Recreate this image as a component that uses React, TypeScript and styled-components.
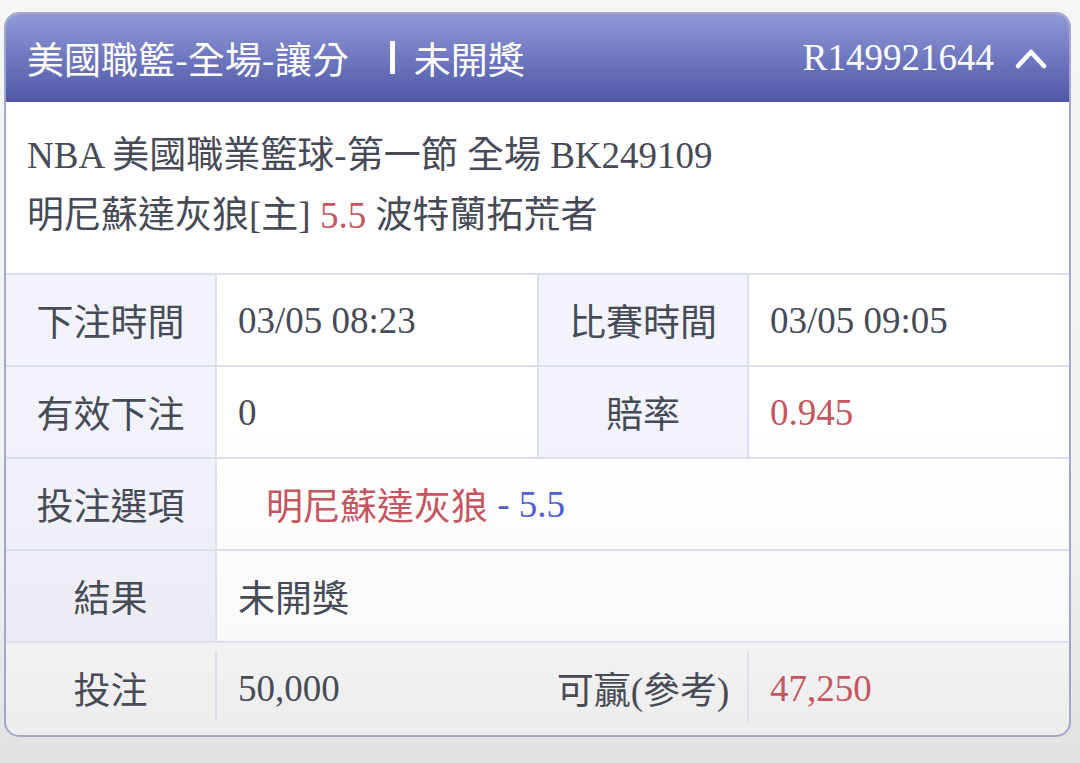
import React from "react";
import styled, { createGlobalStyle } from "styled-components";

const FONT = `"Liberation Serif", "Noto Sans CJK TC", serif`;
const TEXT = "#464b57";
const RED = "#c55660";
const BLUE = "#4c60d4";
const LINE = "#dcdff0";

const GlobalStyle = createGlobalStyle`
	html, body {
		margin: 0;
		padding: 0;
	}
	body {
		min-height: 763px;
		background: linear-gradient(to bottom, #f6f6f6 0%, #f1f1f1 70%, #e1e1e1 100%);
		font-family: ${FONT};
		color: ${TEXT};
	}
`;

const Page = styled.div`
	padding: 12px 9px 28px 4px;
`;

const Card = styled.div`
	border: 2px solid #a3a7cf;
	border-radius: 15px;
	overflow: hidden;
	background: linear-gradient(to bottom, #ffffff 0%, #ffffff 55%, #ededed 100%);
`;

const Header = styled.div`
	display: flex;
	align-items: center;
	height: 87px;
	padding: 0 22px 0 21px;
	background: linear-gradient(to bottom, #9099d6 0%, #6f78bf 50%, #5059a6 100%);
	border-bottom: 1px solid #4a539c;
	color: #fff;
	font-size: 37px;
`;

const Title = styled.span`
	font-family: "Noto Sans CJK TC", "Liberation Serif", sans-serif;
`;

const Divider = styled.span`
	display: inline-block;
	width: 5px;
	height: 33px;
	background: #fff;
	margin: 0 19px 0 41px;
`;

const Spacer = styled.div`
	flex: 1;
`;

const OrderNo = styled.span`
	font-family: "Liberation Serif", serif;
	margin-right: 21px;
`;

const Info = styled.div`
	padding: 24px 22px 27px 21px;
	font-size: 37px;
	line-height: 60px;
	background: #fff;
	border-bottom: 2px solid ${LINE};
`;

const Line = styled.div`
	white-space: nowrap;
`;

const Red = styled.span`
	color: ${RED};
`;

const Blue = styled.span`
	color: ${BLUE};
`;

const Table = styled.div`
	display: grid;
	grid-template-columns: 211px 322px 210px 1fr;
	grid-auto-rows: 92px;
	font-size: 37px;
`;

const Label = styled.div<{ $last?: boolean }>`
	display: flex;
	align-items: center;
	justify-content: center;
	background: ${(p) => (p.$last ? "transparent" : "rgba(228, 231, 246, 0.45)")};
	border-right: 2px solid ${(p) => (p.$last ? "transparent" : LINE)};
	border-bottom: 2px solid ${(p) => (p.$last ? "transparent" : LINE)};
	position: relative;
`;

const Value = styled.div<{ $span?: boolean; $indent?: number; $last?: boolean; $end?: boolean }>`
	display: flex;
	align-items: center;
	padding-left: ${(p) => p.$indent ?? 21}px;
	grid-column: ${(p) => (p.$span ? "span 3" : "auto")};
	background: ${(p) => (p.$last ? "transparent" : "rgba(255, 255, 255, 0.6)")};
	border-right: ${(p) => (p.$last || p.$end ? "none" : `2px solid ${LINE}`)};
	border-bottom: 2px solid ${(p) => (p.$last ? "transparent" : LINE)};
	white-space: nowrap;
`;

const Sep = styled.span`
	position: absolute;
	right: -2px;
	top: 9px;
	bottom: 11px;
	width: 2px;
	background: ${LINE};
`;

const Chevron = () => (
	<svg width="32" height="22" viewBox="0 0 32 22" fill="none">
		<polyline
			points="3,19 16,5 29,19"
			stroke="#fff"
			strokeWidth="4.5"
			strokeLinecap="round"
			strokeLinejoin="round"
		/>
	</svg>
);

const App: React.FC = () => {
	return (
		<>
			<GlobalStyle />
			<Page>
				<Card>
					<Header>
						<Title>美國職籃-全場-讓分</Title>
						<Divider />
						<Title>未開獎</Title>
						<Spacer />
						<OrderNo>R149921644</OrderNo>
						<Chevron />
					</Header>
					<Info>
						<Line>NBA 美國職業籃球-第一節 全場 BK249109</Line>
						<Line>
							明尼蘇達灰狼[主] <Red>5.5</Red> 波特蘭拓荒者
						</Line>
					</Info>
					<Table>
						<Label>下注時間</Label>
						<Value>03/05 08:23</Value>
						<Label>比賽時間</Label>
						<Value $end>03/05 09:05</Value>

						<Label>有效下注</Label>
						<Value>0</Value>
						<Label>賠率</Label>
						<Value $end>
							<Red>0.945</Red>
						</Value>

						<Label>投注選項</Label>
						<Value $span $end $indent={49}>
							<Red>明尼蘇達灰狼</Red>
							<Blue>&nbsp;- 5.5</Blue>
						</Value>

						<Label>結果</Label>
						<Value $span $end>未開獎</Value>

						<Label $last>
							投注
							<Sep />
						</Label>
						<Value $last>50,000</Value>
						<Label $last>
							可贏(參考)
							<Sep />
						</Label>
						<Value $last>
							<Red>47,250</Red>
						</Value>
					</Table>
				</Card>
			</Page>
		</>
	);
};

export default App;
